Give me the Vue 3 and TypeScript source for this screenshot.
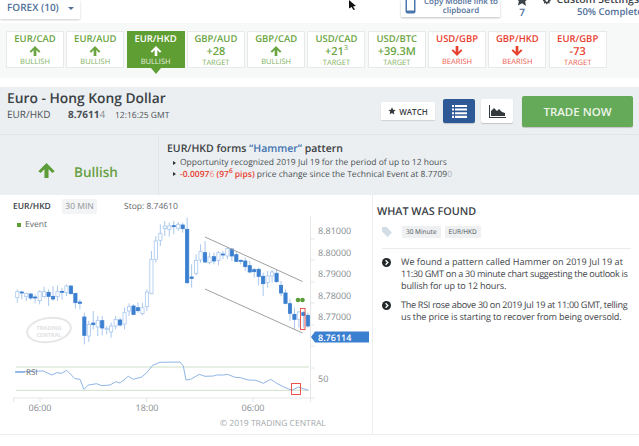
<script setup lang="ts">
interface Tile {
  pair: string
  value?: string
  sup?: string
  label: string
  tone: 'up' | 'down'
  active?: boolean
}

const tiles: Tile[] = [
  { pair: 'EUR/CAD', label: 'BULLISH', tone: 'up' },
  { pair: 'EUR/AUD', label: 'BULLISH', tone: 'up' },
  { pair: 'EUR/HKD', label: 'BULLISH', tone: 'up', active: true },
  { pair: 'GBP/AUD', value: '+28', label: 'TARGET', tone: 'up' },
  { pair: 'GBP/CAD', label: 'BULLISH', tone: 'up' },
  { pair: 'USD/CAD', value: '+21', sup: '3', label: 'TARGET', tone: 'up' },
  { pair: 'USD/BTC', value: '+39.3M', label: 'TARGET', tone: 'up' },
  { pair: 'USD/GBP', label: 'BEARISH', tone: 'down' },
  { pair: 'GBP/HKD', label: 'BEARISH', tone: 'down' },
  { pair: 'EUR/GBP', value: '-73', label: 'TARGET', tone: 'down' },
]

// wick top, wick bottom, body top, body bottom, filled
const raw: [number, number, number, number, number][] = [
  [280, 320, 287, 305, 0], [285, 310, 288, 291, 1], [290, 315, 292, 302, 0], [290, 312, 294, 306, 1],
  [295, 322, 303, 305, 1], [283, 325, 287, 314, 0], [272, 305, 287, 302, 0], [280, 330, 289, 301, 1],
  [270, 315, 301, 309, 1], [268, 315, 286, 302, 0], [275, 310, 286, 289, 1], [265, 300, 270, 290, 0],
  [268, 295, 270, 293, 1], [292, 338, 292, 320, 1], [310, 340, 318, 322, 1], [350, 445, 363, 418, 1],
  [375, 438, 385, 420, 0], [345, 400, 381, 386, 1], [360, 420, 373, 393, 0], [360, 418, 374, 396, 1],
  [390, 415, 397, 400, 0], [380, 425, 390, 408, 0], [360, 400, 370, 390, 0], [365, 392, 372, 387, 1],
  [335, 400, 350, 384, 0], [322, 360, 332, 345, 0], [325, 358, 330, 355, 1], [320, 350, 335, 344, 1],
  [320, 358, 335, 353, 0], [280, 345, 288, 332, 0], [165, 295, 190, 293, 0], [120, 200, 135, 190, 0],
  [85, 150, 112, 133, 0], [75, 120, 90, 98, 0], [80, 122, 90, 100, 0], [75, 115, 89, 91, 1],
  [78, 105, 85, 97, 0], [80, 110, 87, 98, 1], [65, 265, 100, 260, 1], [205, 275, 243, 247, 1],
  [175, 238, 193, 232, 0], [145, 200, 166, 192, 0], [135, 200, 170, 198, 1], [170, 205, 183, 200, 0],
  [170, 205, 182, 195, 1], [165, 208, 170, 193, 0], [165, 190, 174, 177, 1], [155, 190, 157, 180, 0],
  [157, 195, 159, 180, 1], [165, 198, 176, 196, 1], [190, 205, 193, 196, 1], [185, 225, 195, 212, 1],
  [195, 232, 209, 228, 1], [215, 245, 221, 227, 1], [215, 268, 220, 241, 1], [230, 300, 241, 263, 1],
  [225, 275, 240, 260, 0], [222, 260, 228, 240, 0], [220, 260, 232, 257, 1], [255, 300, 268, 291, 1],
  [280, 325, 291, 322, 1], [310, 375, 323, 352, 1], [335, 400, 355, 370, 1], [345, 395, 348, 370, 0],
  [345, 395, 350, 358, 1], [350, 395, 358, 390, 1],
]

const candles = raw.map(([wt, wb, bt, bb, filled], i) => ({
  x: 17.3 + 4.47 * i,
  wickTop: 195 + wt / 3,
  wickBottom: 195 + wb / 3,
  bodyTop: 195 + bt / 3,
  bodyHeight: Math.max((bb - bt) / 3, 1),
  filled: filled === 1,
}))

const rsiPoints = [
  [48, 77], [130, 75], [155, 87], [170, 80], [185, 82], [200, 73], [225, 98], [240, 100], [252, 130],
  [265, 117], [290, 113], [305, 119], [330, 117], [348, 107], [360, 111], [385, 91], [400, 100], [425, 93],
  [440, 80], [458, 58], [480, 49], [540, 48], [550, 60], [558, 102], [572, 100], [598, 85], [615, 91],
  [640, 90], [650, 87], [670, 87], [682, 85], [705, 94], [722, 95], [745, 102], [768, 103], [790, 112],
  [812, 100], [830, 112], [850, 122], [875, 133], [895, 123], [925, 133],
]
  .map(([x, y]) => `${(x / 3).toFixed(1)},${(345 + y / 3).toFixed(1)}`)
  .join(' ')

const priceLabels = [
  { text: '8.81000', y: 233 },
  { text: '8.80000', y: 254.5 },
  { text: '8.79000', y: 276 },
  { text: '8.78000', y: 297.5 },
  { text: '8.77000', y: 319 },
]
const timeLabels = [
  { text: '06:00', x: 40 },
  { text: '18:00', x: 147 },
  { text: '06:00', x: 253 },
]
</script>

<template>
  <div class="page">
    <header class="topbar">
      <div class="forex">FOREX (10) <span class="caret"></span></div>
      <div class="topbar-right">
        <div class="mobile-btn">
          <svg width="11" height="17" viewBox="0 0 11 17">
            <rect x="0.5" y="0.5" width="10" height="16" rx="2" fill="#4a76ad" />
            <rect x="2" y="2.5" width="7" height="11" fill="#fff" />
          </svg>
          <span>Copy Mobile link to<br />clipboard</span>
        </div>
        <div class="stars">
          <svg width="14" height="14" viewBox="0 0 24 24">
            <path fill="#3c4348" d="M12 1l3.4 7.2 7.6 1-5.6 5.4 1.4 7.8L12 17.7l-6.8 3.7 1.4-7.8L1 9.2l7.6-1z" />
          </svg>
          <span>7</span>
        </div>
        <div class="settings">
          <div class="settings-title">
            <svg width="11" height="11" viewBox="0 0 24 24">
              <circle cx="12" cy="12" r="6.5" fill="none" stroke="#3c4348" stroke-width="5" />
              <path stroke="#3c4348" stroke-width="4" d="M12 0v5M12 19v5M0 12h5M19 12h5M3.5 3.5l3.5 3.5M17 17l3.5 3.5M3.5 20.5L7 17M17 7l3.5-3.5" />
            </svg>
            Custom Settings
          </div>
          <div class="complete">50% Complete</div>
        </div>
      </div>
      <svg class="cursor" width="9" height="10" viewBox="0 0 9 10">
        <path fill="#111" d="M0 0l7 6-3 .4 2 3.2-1.6.4L2.6 7 0 8.5z" />
      </svg>
    </header>

    <section class="strip">
      <div
        v-for="t in tiles"
        :key="t.pair"
        class="tile"
        :class="[t.tone, { active: t.active }]"
      >
        <div class="tile-pair">{{ t.pair }}</div>
        <div v-if="t.value" class="tile-value">{{ t.value }}<sup v-if="t.sup">{{ t.sup }}</sup></div>
        <svg v-else class="tile-arrow" :class="{ flip: t.tone === 'down' }" width="12" height="11" viewBox="0 0 12 11">
          <path fill="currentColor" d="M6 0l6 6-1.7 1.3L7.5 4.5V11h-3V4.5L1.7 7.3 0 6z" />
        </svg>
        <div class="tile-label">{{ t.label }}</div>
      </div>
    </section>

    <section class="summary">
      <div class="summary-head">
        <div>
          <h1>Euro - Hong Kong Dollar</h1>
          <div class="quote">
            <span class="quote-pair">EUR/HKD</span>
            <span class="quote-price">8.7611<em>4</em></span>
            <span class="quote-time">12:16:25 GMT</span>
          </div>
        </div>
        <div class="actions">
          <button class="watch">
            <svg width="8" height="8" viewBox="0 0 24 24">
              <path fill="#33393d" d="M12 1l3.4 7.2 7.6 1-5.6 5.4 1.4 7.8L12 17.7l-6.8 3.7 1.4-7.8L1 9.2l7.6-1z" />
            </svg>
            WATCH
          </button>
          <button class="view view-list">
            <svg width="15" height="13" viewBox="0 0 15 13">
              <path fill="#fff" d="M0 0h2v2H0zM3 0h12v2H3zM0 3.6h2v2H0zM3 3.6h12v2H3zM0 7.2h2v2H0zM3 7.2h12v2H3zM0 10.8h2V13H0zM3 10.8h12V13H3z" />
            </svg>
          </button>
          <button class="view view-chart">
            <svg width="17" height="13" viewBox="0 0 17 13">
              <path fill="#33393d" d="M0 0h1v12h16v1H0z" />
              <path fill="#33393d" d="M2 11V6l3-3 3 3 2-2 3 3 3 1v3z" />
            </svg>
          </button>
          <button class="trade">TRADE NOW</button>
        </div>
      </div>
      <div class="signal">
        <div class="signal-side">
          <svg width="17" height="15" viewBox="0 0 12 11">
            <path fill="#5c9d3a" d="M6 0l6 6-1.7 1.3L7.5 4.5V11h-3V4.5L1.7 7.3 0 6z" />
          </svg>
          <span>Bullish</span>
        </div>
        <div class="signal-body">
          <h2>EUR/HKD forms <span>“Hammer”</span> pattern</h2>
          <ul>
            <li>Opportunity recognized 2019 Jul 19 for the period of up to 12 hours</li>
            <li>
              <b>-0.0097<i>6</i> (97<sup>6</sup> pips)</b> price change since the Technical Event at 8.7709<i class="pale">0</i>
            </li>
          </ul>
        </div>
      </div>
    </section>

    <section class="detail">
      <div class="chart">
        <div class="chart-head">
          <strong>EUR/HKD</strong>
          <span class="interval">30 MIN</span>
          <span class="stop">Stop: 8.74610</span>
        </div>
        <div class="event"><i></i>Event</div>
        <svg class="plot" width="372" height="220" viewBox="0 215 372 220">
          <ellipse cx="49" cy="329" rx="22" ry="12" fill="none" stroke="#e4e6e7" stroke-width="2" transform="rotate(-8 49 329)" />
          <text x="49" y="329" class="mark">TRADING</text>
          <text x="49" y="336" class="mark">CENTRAL</text>

          <g v-for="(c, i) in candles" :key="i">
            <line :x1="c.x" :x2="c.x" :y1="c.wickTop" :y2="c.wickBottom" stroke="#a9c8ee" stroke-width="1" />
            <rect
              :x="c.x - 1.6"
              :y="c.bodyTop"
              width="3.2"
              :height="c.bodyHeight"
              :fill="c.filled ? '#3b7fd0' : '#fff'"
              :stroke="c.filled ? '#3b7fd0' : '#a9c8ee'"
              stroke-width="0.8"
            />
          </g>

          <line x1="205" y1="236" x2="302.5" y2="280.5" stroke="#a0a0a0" />
          <line x1="205" y1="288" x2="302.5" y2="332" stroke="#a0a0a0" />
          <circle cx="298" cy="299" r="2.3" fill="#5c9d3a" />
          <circle cx="302.5" cy="299" r="2.3" fill="#5c9d3a" />
          <rect x="300.5" y="307.5" width="4.5" height="21" fill="none" stroke="#e8574a" />

          <path d="M310.5 215v155M310.5 238h4M310.5 259h4M310.5 281h4M310.5 302h4M310.5 324h4M310.5 345h4" fill="none" stroke="#e4e6e7" />
          <text v-for="p in priceLabels" :key="p.text" x="318" :y="p.y" class="axis">{{ p.text }}</text>
          <path d="M311 336l4-5.5h54v11h-54z" fill="#3b7fd0" />
          <text x="318" y="339.5" class="axis tag">8.76114</text>

          <line x1="16" y1="366" x2="309" y2="366" stroke="#cfe0c8" />
          <line x1="16" y1="389.3" x2="309" y2="389.3" stroke="#cfe0c8" />
          <line x1="15" y1="371" x2="25" y2="371" stroke="#3b7fd0" />
          <polyline :points="rsiPoints" fill="none" stroke="#8fb5e6" />
          <text x="26" y="374" class="axis rsi">RSI</text>
          <rect x="291.5" y="382.5" width="9" height="11" fill="none" stroke="#e8574a" />

          <path d="M13.5 397h297M13.5 397v4M40 397v4M146.5 397v4M253 397v4M310.5 357v44M310.5 367h4M310.5 397h4" fill="none" stroke="#e4e6e7" />
          <text x="318" y="381" class="axis">50</text>
          <text v-for="t in timeLabels" :key="t.x" :x="t.x" y="410" class="axis middle">{{ t.text }}</text>
          <text x="220" y="425" class="axis copy">© 2019 TRADING CENTRAL</text>
        </svg>
      </div>

      <aside class="found">
        <h3>WHAT WAS FOUND</h3>
        <div class="tags">
          <svg width="10" height="10" viewBox="0 0 10 10">
            <path fill="#d3dde6" d="M0 0h4.5L10 5.5 5.5 10 0 4.5z" />
          </svg>
          <span class="chip">30 Minute</span>
          <span class="chip">EUR/HKD</span>
        </div>
        <div class="found-item">
          <svg width="9" height="9" viewBox="0 0 10 10">
            <circle cx="5" cy="5" r="5" fill="#23282b" />
            <path d="M4 2.5L6.5 5 4 7.5" fill="none" stroke="#fff" stroke-width="1.5" />
          </svg>
          <p>
            <span>We found a pattern called Hammer on 2019 Jul 19 at</span>
            <span class="tight">11:30 GMT on a 30 minute chart suggesting the outlook is</span>
            <span class="snug">bullish for up to 12 hours.</span>
          </p>
        </div>
        <div class="found-item">
          <svg width="9" height="9" viewBox="0 0 10 10">
            <circle cx="5" cy="5" r="5" fill="#23282b" />
            <path d="M4 2.5L6.5 5 4 7.5" fill="none" stroke="#fff" stroke-width="1.5" />
          </svg>
          <p>
            <span class="tight">The RSI rose above 30 on 2019 Jul 19 at 11:00 GMT, telling</span>
            <span class="snug">us the price is starting to recover from being oversold.</span>
          </p>
        </div>
      </aside>
    </section>
  </div>
</template>

<style>
html,
body {
  margin: 0;
  background: #fff;
}
</style>

<style scoped>
.page {
  position: relative;
  width: 639px;
  height: 446px;
  overflow: hidden;
  background: #fff;
  font-family: 'Open Sans', sans-serif;
  text-rendering: geometricPrecision;
  color: #4a5156;
}

/* top bar */
.topbar {
  position: relative;
  height: 23px;
  display: flex;
  justify-content: space-between;
  align-items: flex-end;
  overflow: hidden;
}
.forex {
  width: 80px;
  height: 19px;
  margin-bottom: 4px;
  padding-left: 7px;
  box-sizing: border-box;
  background: #fff;
  box-shadow: 0 1px 2px rgba(0, 0, 0, 0.2);
  font-size: 10px;
  font-weight: 600;
  line-height: 15px;
  color: #50709a;
  white-space: nowrap;
}
.caret {
  display: inline-block;
  margin-left: 7px;
  vertical-align: 1px;
  border: 3px solid transparent;
  border-top: 3px solid #50709a;
  border-bottom: 0;
}
.topbar-right {
  display: flex;
  align-items: flex-end;
  width: 238px;
  height: 23px;
  flex-shrink: 0;
}
.mobile-btn {
  width: 99px;
  height: 17px;
  margin-bottom: 6px;
  padding-left: 4px;
  box-sizing: border-box;
  display: flex;
  align-items: flex-end;
  gap: 8px;
  flex-shrink: 0;
  background: #fff;
  box-shadow: 0 1px 2px rgba(0, 0, 0, 0.25);
  font-size: 8px;
  line-height: 9px;
  font-weight: 600;
  color: #50709a;
  text-align: center;
}
.mobile-btn svg {
  margin-bottom: 3px;
  flex-shrink: 0;
}
.mobile-btn span {
  padding-bottom: 2px;
  white-space: nowrap;
}
.stars {
  width: 14px;
  margin: 0 0 6px 15px;
  display: flex;
  flex-direction: column;
  align-items: center;
  flex-shrink: 0;
  font-size: 10px;
  line-height: 10px;
  font-weight: 600;
  color: #50709a;
}
.settings {
  width: 96px;
  margin: 0 0 5px 14px;
  flex-shrink: 0;
  white-space: nowrap;
}
.settings-title {
  display: flex;
  align-items: center;
  gap: 6px;
  font-size: 10.5px;
  line-height: 12px;
  color: #3c4348;
  font-weight: 600;
}
.complete {
  padding-left: 34px;
  font-size: 9.5px;
  line-height: 12px;
  font-weight: 600;
  color: #50709a;
}
.cursor {
  position: absolute;
  left: 349px;
  top: 0;
}

/* pair strip */
.strip {
  height: 55px;
  box-sizing: border-box;
  padding: 8px 0 0 6px;
  display: flex;
  gap: 2.3px;
  background: #f7f8f8;
}
.tile {
  position: relative;
  width: 58px;
  height: 37px;
  box-sizing: border-box;
  border: 1px solid #e7e9ea;
  background: #fff;
  display: flex;
  flex-direction: column;
  align-items: center;
  text-align: center;
}
.tile.up {
  color: #6aa53f;
}
.tile.down {
  color: #e8402f;
}
.tile.active {
  background: #5f9e33;
  border-color: #5f9e33;
  color: #fff;
}
.tile.active::after {
  content: '';
  position: absolute;
  left: 50%;
  bottom: -7px;
  margin-left: -5px;
  border: 5px solid transparent;
  border-top: 6px solid #5f9e33;
  border-bottom: 0;
}
.tile-pair {
  margin-top: 1px;
  font-size: 9.5px;
  line-height: 12px;
  font-weight: 600;
  white-space: nowrap;
}
.tile-arrow {
  display: block;
  height: 11px;
  margin: 1px 0;
}
.tile-arrow.flip {
  transform: rotate(180deg);
}
.tile-value {
  font-size: 11px;
  line-height: 13px;
  font-weight: 600;
  white-space: nowrap;
}
.tile-value sup {
  font-size: 7px;
  line-height: 0;
  font-weight: 400;
}
.tile-label {
  font-size: 7.5px;
  line-height: 10px;
  opacity: 0.85;
}

/* summary */
.summary {
  margin-top: 9px;
  background: #eceff1;
}
.summary-head {
  height: 48px;
  box-sizing: border-box;
  padding: 0 6px 0 7px;
  display: flex;
  justify-content: space-between;
  align-items: flex-start;
  border-bottom: 1px solid #e2e5e7;
}
.summary-head h1 {
  margin: 2px 0 0;
  font-size: 13.8px;
  line-height: 19px;
  font-weight: 600;
  color: #3a4145;
}
.quote {
  display: flex;
  align-items: baseline;
  margin-top: 1px;
  font-size: 10px;
  line-height: 11px;
}
.quote-pair {
  width: 61px;
}
.quote-price {
  width: 47px;
  font-weight: 700;
}
.quote-price em {
  font-style: normal;
  font-weight: 400;
  color: #888f94;
}
.quote-time {
  font-size: 8.5px;
}
.actions {
  display: flex;
  align-items: center;
  height: 46px;
  margin-top: 1px;
}
.actions button {
  border: 0;
  padding: 0;
  font-family: inherit;
  display: flex;
  align-items: center;
  justify-content: center;
}
.watch {
  width: 54px;
  height: 18px;
  gap: 3px;
  border-radius: 1px;
  background: #fff;
  font-size: 8px;
  font-weight: 600;
  color: #3a4145;
  box-shadow: 0 1px 1px rgba(0, 0, 0, 0.12);
}
.view {
  height: 24px;
  border-radius: 2px;
  box-shadow: 0 1px 1px rgba(0, 0, 0, 0.18);
}
.view-list {
  width: 32px;
  margin-left: 8px;
  background: #2d5a96;
}
.view-chart {
  width: 32px;
  margin-left: 6px;
  background: #fff;
}
.trade {
  width: 111px;
  height: 31px;
  margin-left: 9px;
  border-radius: 2px;
  background: #64aa58;
  color: #edf5ea;
  font-size: 11.5px;
  font-weight: 600;
  box-shadow: 0 1px 1px rgba(0, 0, 0, 0.18);
}
.signal {
  height: 60px;
  display: flex;
}
.signal-side {
  width: 159px;
  box-sizing: border-box;
  padding: 14px 0 0 38px;
  border-right: 1px solid #e2e5e7;
  display: flex;
  align-items: center;
  gap: 19px;
  font-size: 13.5px;
  font-weight: 600;
  color: #66a144;
}
.signal-side svg {
  margin-top: -3px;
}
.signal-body {
  padding: 7px 0 0 8px;
}
.signal-body h2 {
  margin: 0;
  font-size: 10.5px;
  line-height: 15px;
  font-weight: 600;
  color: #3a4145;
}
.signal-body h2 span {
  color: #3f73b0;
}
.signal-body ul {
  margin: 0;
  padding: 0;
  list-style: none;
  font-size: 8.5px;
  line-height: 11.5px;
  white-space: nowrap;
}
.signal-body li {
  position: relative;
  padding-left: 13px;
}
.signal-body li::before {
  content: '';
  position: absolute;
  left: 6px;
  top: 3.5px;
  border-left: 3px solid #2b3033;
  border-top: 2.5px solid transparent;
  border-bottom: 2.5px solid transparent;
}
.signal-body b {
  font-weight: 600;
  color: #e8402f;
}
.signal-body i {
  font-style: normal;
  font-weight: 400;
  color: #ee8d84;
}
.signal-body sup {
  font-size: 6.5px;
  line-height: 0;
}
.signal-body .pale {
  color: #aab0b4;
}

/* chart + text */
.detail {
  height: 239px;
  display: flex;
  border-bottom: 1px solid #eceeef;
}
.chart {
  position: relative;
  width: 373px;
  flex-shrink: 0;
  border-right: 1px solid #eceeef;
  box-sizing: border-box;
}
.chart-head {
  height: 19px;
  padding: 2px 0 0 13px;
  display: flex;
  align-items: center;
  font-size: 8.5px;
  white-space: nowrap;
}
.chart-head strong {
  width: 49px;
  font-weight: 600;
  color: #3a4145;
}
.interval {
  width: 35px;
  padding: 2px 0;
  text-align: center;
  background: #f3f4f5;
  border-radius: 2px;
  color: #8d9398;
}
.stop {
  margin-left: 27px;
  color: #5f666b;
}
.event {
  position: absolute;
  left: 17px;
  top: 24px;
  display: flex;
  align-items: center;
  gap: 4px;
  font-size: 8.5px;
  line-height: 12px;
  color: #5f666b;
}
.event i {
  width: 4px;
  height: 4px;
  background: #5f9e33;
}
.plot {
  display: block;
}
.axis {
  font-size: 9px;
  fill: #868c90;
}
.axis.tag {
  fill: #fff;
  font-weight: 600;
}
.axis.middle {
  text-anchor: middle;
}
.axis.rsi {
  font-size: 8px;
  fill: #5f666b;
}
.axis.copy {
  font-size: 8.5px;
  fill: #a3a8ab;
}
.mark {
  font-size: 5.5px;
  font-weight: 700;
  fill: #e0e2e3;
  text-anchor: middle;
}

.found {
  flex: 1;
  padding: 9px 8px 0 4px;
  min-width: 0;
}
.found h3 {
  margin: 0;
  font-size: 10.8px;
  line-height: 15px;
  font-weight: 600;
  color: #3a4145;
}
.tags {
  margin: 7px 0 0 5px;
  padding-bottom: 10px;
  display: flex;
  align-items: center;
  gap: 4px;
  border-bottom: 1px solid #e9ebec;
}
.tags svg {
  margin-right: 6px;
}
.chip {
  padding: 0 4px;
  font-size: 6.5px;
  line-height: 12px;
  background: #eef0f1;
  border-radius: 1px;
}
.found-item {
  display: flex;
  gap: 10px;
  margin: 7px 0 0 5px;
}
.found-item svg {
  margin-top: 2px;
  flex-shrink: 0;
}
.found-item p {
  margin: 0;
  font-size: 9.1px;
  line-height: 12px;
  color: #3f464a;
}
/* each line is held to the reference's break and width */
.found-item p span {
  display: block;
  white-space: nowrap;
}
.found-item p .tight {
  letter-spacing: -0.3px;
}
.found-item p .snug {
  letter-spacing: -0.15px;
}
</style>
